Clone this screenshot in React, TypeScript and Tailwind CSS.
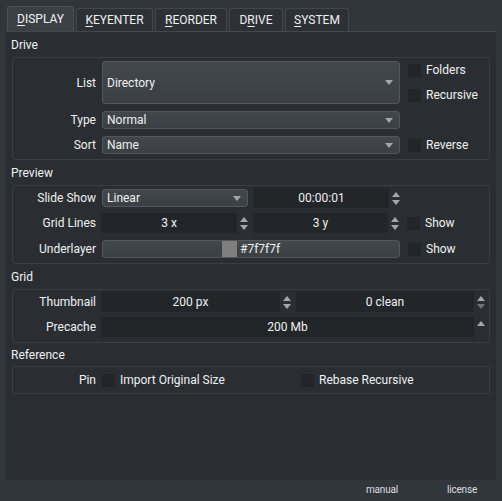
import React from "react";

const tabs = [
    { first: "D", rest: "ISPLAY", w: "w-[67px]", active: true },
    { first: "K", rest: "EYENTER", w: "w-[77px]" },
    { first: "R", rest: "EORDER", w: "w-[72px]" },
    { pre: "D", first: "R", rest: "IVE", w: "w-[54px]" },
    { first: "S", rest: "YSTEM", w: "w-[64px]" },
];

function Caret({ down = true, dim = false }: { down?: boolean; dim?: boolean }) {
    return (
        <svg width="8" height="5" viewBox="0 0 8 5">
            <path d={down ? "M0 0 L8 0 L4 5 Z" : "M0 5 L8 5 L4 0 Z"} fill={dim ? "#6f7378" : "#a3a7ab"} />
        </svg>
    );
}

function Combo({ value, className = "" }: { value: string; className?: string }) {
    return (
        <div
            className={`flex items-center justify-between pl-[4px] pr-[6px] border border-[#52575c] rounded-[3px] bg-gradient-to-b from-[#42474c] to-[#3b4045] ${className}`}
        >
            <span>{value}</span>
            <Caret />
        </div>
    );
}

function Spin({ value, className = "", downDim = false, noDown = false }: { value: string; className?: string; downDim?: boolean; noDown?: boolean }) {
    return (
        <div className={`flex h-[20px] ${className}`}>
            <div className="flex-1 flex items-center justify-center bg-[#232629]">{value}</div>
            <div className="w-[12px] flex flex-col items-center justify-center gap-[3px] pl-[2px]">
                <Caret down={false} />
                {noDown ? <div className="h-[5px]" /> : <Caret dim={downDim} />}
            </div>
        </div>
    );
}

function Check({ label, className = "" }: { label: string; className?: string }) {
    return (
        <div className={`flex items-center gap-[5px] ${className}`}>
            <div className="w-[13px] h-[13px] bg-[#232629]" />
            <span>{label}</span>
        </div>
    );
}

function Label({ text }: { text: string }) {
    return <div className="w-[84px] shrink-0 text-right pr-[1px]">{text}</div>;
}

function Section({ title, children, className = "", head = "h-[25px]" }: { title: string; children: React.ReactNode; className?: string; head?: string }) {
    return (
        <div>
            <div className={`${head} flex items-center pl-[5px] pt-[1px]`}>{title}</div>
            <div className={`mx-[6px] border border-[#3a3f44] rounded-[3px] ${className}`}>{children}</div>
        </div>
    );
}

export default function App() {
    return (
        <div
            className="w-[502px] h-[501px] bg-[#31363b] text-[#eff0f1] text-[12px] leading-[16px] flex flex-col overflow-hidden"
            style={{ fontFamily: 'Roboto, "Noto Sans", sans-serif' }}
        >
            {/* tab bar */}
            <div className="h-[31px] flex items-end pl-[7px] gap-[2px] shrink-0">
                {tabs.map((t, i) => (
                    <div
                        key={i}
                        className={`${t.w} flex items-center justify-center rounded-t-[3px] border border-b-0 ${t.active ? "h-[25px] bg-[#3b4045] border-[#4b5055]" : "h-[23px] bg-[#2d3135] border-[#42474c]"
                            }`}
                    >
                        <span>
                            {t.pre}
                            <span className="underline underline-offset-2">{t.first}</span>
                            {t.rest}
                        </span>
                    </div>
                ))}
            </div>

            {/* pane */}
            <div className="ml-[6px] w-[490px] h-[449px] shrink-0 bg-[#2a2e32] border-t border-[#43484d]">
                <Section title="Drive" className="pt-[3px] pb-[5px]">
                    <div className="flex flex-col gap-[7px]">
                        <div className="flex items-center gap-[5px]">
                            <Label text="List" />
                            <Combo value="Directory" className="w-[298px] h-[43px]" />
                            <div className="flex flex-col gap-[9px] ml-[3px]">
                                <Check label="Folders" />
                                <Check label="Recursive" />
                            </div>
                        </div>
                        <div className="flex items-center gap-[5px]">
                            <Label text="Type" />
                            <Combo value="Normal" className="w-[298px] h-[18px]" />
                        </div>
                        <div className="flex items-center gap-[5px]">
                            <Label text="Sort" />
                            <Combo value="Name" className="w-[298px] h-[18px]" />
                            <Check label="Reverse" className="ml-[3px]" />
                        </div>
                    </div>
                </Section>

                <Section title="Preview" className="pt-[2px] pb-[5px]">
                    <div className="flex flex-col">
                        <div className="flex items-center gap-[5px]">
                            <Label text="Slide Show" />
                            <Combo value="Linear" className="w-[146px] h-[18px]" />
                            <Spin value="00:00:01" className="w-[147px] ml-[1px]" />
                        </div>
                        <div className="flex items-center gap-[4px] mt-[5px]">
                            <Label text="Grid Lines" />
                            <Spin value="3 x" className="w-[148px]" />
                            <Spin value="3 y" className="w-[147px]" />
                            <Check label="Show" className="ml-[3px]" />
                        </div>
                        <div className="flex items-center gap-[5px] mt-[7px]">
                            <Label text="Underlayer" />
                            <div className="w-[298px] h-[18px] flex items-stretch border border-[#52575c] rounded-[3px] bg-gradient-to-b from-[#42474c] to-[#3b4045] overflow-hidden">
                                <div className="w-[119px]" />
                                <div className="w-[15px] bg-[#7f7f7f]" />
                                <span className="pl-[3px] flex items-center">#7f7f7f</span>
                            </div>
                            <Check label="Show" className="ml-[3px]" />
                        </div>
                    </div>
                </Section>

                <Section title="Grid" className="pt-[2px] pb-[5px]">
                    <div className="flex flex-col gap-[5px]">
                        <div className="flex items-center gap-[4px]">
                            <Label text="Thumbnail" />
                            <Spin value="200 px" className="w-[191px]" />
                            <Spin value="0 clean" className="w-[190px]" downDim />
                        </div>
                        <div className="flex items-center gap-[4px]">
                            <Label text="Precache" />
                            <Spin value="200 Mb" className="w-[385px]" noDown />
                        </div>
                    </div>
                </Section>

                <Section title="Reference" head="h-[23px]" className="h-[28px] flex items-center">
                    <div className="flex items-center gap-[5px]">
                        <Label text="Pin" />
                        <Check label="Import Original Size" className="w-[194px]" />
                        <Check label="Rebase Recursive" />
                    </div>
                </Section>
            </div>

            {/* footer */}
            <div className="h-[20px] flex items-center text-[10px] tracking-[-0.2px] text-[#dcdee0]">
                <span className="ml-[366px] w-[81px]">manual</span>
                <span>license</span>
            </div>
        </div>
    );
}
